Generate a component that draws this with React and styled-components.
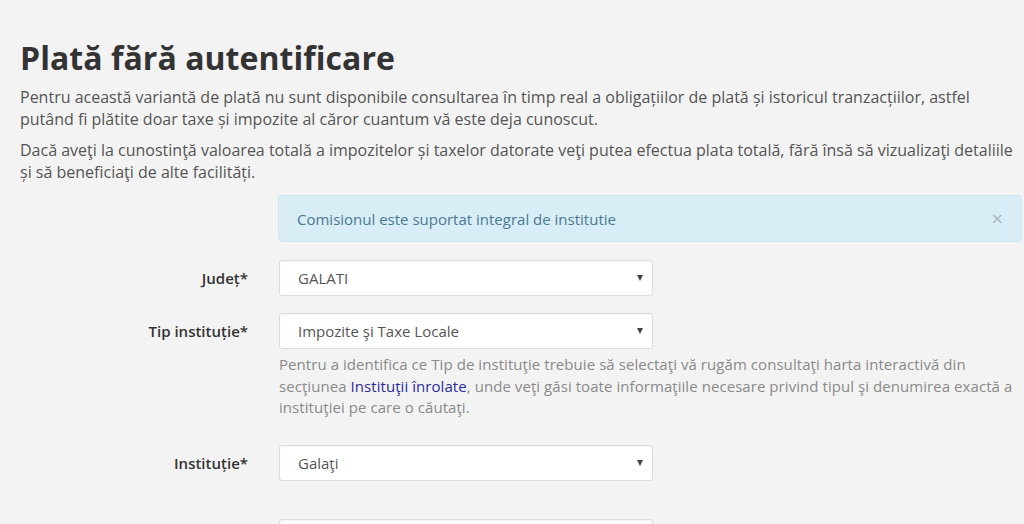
import React from 'react';
import styled, { createGlobalStyle } from 'styled-components';

const GlobalStyle = createGlobalStyle`
  html, body {
    margin: 0;
    padding: 0;
    background: #f3f3f3;
    font-family: "Open Sans", "Noto Sans", sans-serif;
    color: #555;
  }
`;

const Page = styled.main`
  padding: 38px 2px 0 20px;
  height: 524px;
  box-sizing: border-box;
  overflow: hidden;
`;

const Title = styled.h1`
  margin: 0 0 8px;
  font-size: 32px;
  line-height: 40px;
  font-weight: 700;
  color: #333;
  letter-spacing: 0.05px;
`;

const Lead = styled.p`
  margin: 0 0 9px;
  font-size: 16px;
  line-height: 22px;
  color: #555;
`;

const Alert = styled.div`
  margin: 12px 0 18px 258px;
  height: 47px;
  box-sizing: border-box;
  display: flex;
  align-items: center;
  justify-content: space-between;
  padding: 0 18px 0 18px;
  background: #d9edf7;
  border: 1px solid #c8e6f1;
  border-radius: 4px;
  color: #4a7a93;
  font-size: 15px;
`;

const Close = styled.span`
  color: #a9b4ba;
  font-size: 20px;
  line-height: 1;
`;

const Form = styled.form`
  display: flex;
  flex-direction: column;
`;

const Row = styled.div`
  display: grid;
  grid-template-columns: 228px 374px;
  column-gap: 31px;
  margin-bottom: ${p => p.$gap || 17}px;
`;

const Label = styled.label`
  text-align: right;
  font-size: 15px;
  font-weight: 600;
  color: #333;
  line-height: 36px;
`;

const Field = styled.div`
  display: flex;
  flex-direction: column;
`;

const Select = styled.div`
  height: 36px;
  box-sizing: border-box;
  display: flex;
  align-items: center;
  justify-content: space-between;
  padding: 0 9px 0 18px;
  background: #fff;
  border: 1px solid #dcdcdc;
  border-radius: 3px;
  box-shadow: inset 0 1px 1px rgba(0, 0, 0, 0.04);
  font-size: 15px;
  color: #555;
`;

const Caret = styled.span`
  width: 0;
  height: 0;
  border-left: 3.5px solid transparent;
  border-right: 3.5px solid transparent;
  border-top: 6px solid #444;
`;

const Help = styled.p`
  margin: 5px 0 0;
  width: 742px;
  font-size: 15px;
  letter-spacing: 0.06px;
  line-height: 21.5px;
  color: #8a8a8a;
`;

const Link = styled.a`
  color: #2b2b9a;
  text-decoration: none;
`;

export default function App() {
  return (
    <>
      <GlobalStyle />
      <Page>
        <Title>Plată fără autentificare</Title>
        <Lead>
          Pentru această variantă de plată nu sunt disponibile consultarea în timp real a obligațiilor de plată și istoricul tranzacțiilor, astfel putând fi plătite doar taxe și impozite al căror cuantum vă este deja cunoscut.
        </Lead>
        <Lead>
          Dacă aveţi la cunostinţă valoarea totală a impozitelor și taxelor datorate veţi putea efectua plata totală, fără însă să vizualizaţi detaliile și să beneficiaţi de alte facilități.
        </Lead>
        <Alert>
          <span>Comisionul este suportat integral de institutie</span>
          <Close>×</Close>
        </Alert>
        <Form>
          <Row>
            <Label>Județ*</Label>
            <Field>
              <Select>GALATI<Caret /></Select>
            </Field>
          </Row>
          <Row $gap={26}>
            <Label>Tip instituție*</Label>
            <Field>
              <Select>Impozite şi Taxe Locale<Caret /></Select>
              <Help>
                Pentru a identifica ce Tip de instituţie trebuie să selectaţi vă rugăm consultaţi harta interactivă din secţiunea <Link href="#">Instituţii înrolate</Link>, unde veţi găsi toate informaţiile necesare privind tipul şi denumirea exactă a instituţiei pe care o căutaţi.
              </Help>
            </Field>
          </Row>
          <Row $gap={38}>
            <Label>Instituție*</Label>
            <Field>
              <Select>Galaţi<Caret /></Select>
            </Field>
          </Row>
          <Row>
            <span />
            <Field>
              <Select />
            </Field>
          </Row>
        </Form>
      </Page>
    </>
  );
}
